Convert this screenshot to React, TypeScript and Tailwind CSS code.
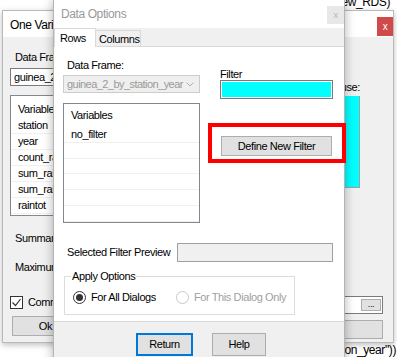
// Two overlapping WinForms dialogs: "One Variable Summarise" behind, "Data Options" in front.

function Btn({ label, className = '' }: { label: string; className?: string }) {
  return (
    <div className={`flex items-center justify-center border border-[#adadad] bg-[#e1e1e1] ${className}`}>
      {label}
    </div>
  );
}

function BackWindow() {
  const rows = ['station', 'year', 'count_rain', 'sum_rain', 'sum_rain_days', 'raintot'];
  return (
    <div className="absolute left-[2px] top-[10px] w-[392px] h-[333px] border border-[#b9b9b9] bg-[#f0f0f0] shadow-[0_2px_6px_rgba(0,0,0,0.25)] flex flex-col">
      {/* title bar */}
      <div className="h-[26px] bg-white flex items-start justify-between pl-[7px]">
        <span className="mt-[8px] text-[12px] leading-[13px]">One Variable Summarise</span>
        <div className="mt-[6px] w-[16px] h-[19px] bg-[#d0494b] text-white text-[10px] flex items-center justify-center">x</div>
      </div>

      <div className="flex flex-1 pl-[7px] pr-[10px]">
        {/* left column */}
        <div className="w-[160px] flex flex-col">
          <span className="mt-[14px] ml-[5px]">Data Frame:</span>
          <div className="mt-[4px] h-[18px] border border-[#7a7a7a] bg-white flex items-center pl-[3px] whitespace-nowrap overflow-hidden">
            guinea_2_by_station_year
          </div>
          <div className="mt-[9px] h-[121px] border border-[#828790] bg-white flex flex-col">
            <div className="h-[22px] flex items-end pb-[2px] pl-[7px]">Variables</div>
            {rows.map(r => (
              <div key={r} className="h-[16px] flex items-center pl-[7px] border-b border-[#f0f0f0]">{r}</div>
            ))}
          </div>
          <span className="mt-[16px] ml-[5px] whitespace-nowrap">Summaries</span>
          <span className="mt-[16px] ml-[5px] whitespace-nowrap">Maximum number of factor levels</span>
          <div className="mt-[22px] flex items-center">
            <div className="w-[13px] h-[13px] border border-[#333] bg-white flex items-center justify-center">
              <svg width="11" height="11" viewBox="0 0 11 11">
                <polyline points="1.5,5.5 4.5,8.5 9.5,2" fill="none" stroke="#333" strokeWidth="1.2" />
              </svg>
            </div>
            <span className="ml-[5px] whitespace-nowrap">Comment:</span>
          </div>
          <Btn label="Ok" className="mt-[7px] ml-[2px] w-[67px] h-[20px]" />
        </div>

        {/* right column */}
        <div className="ml-auto w-[120px] flex flex-col">
          <span className="mt-[44px] pr-[23px] text-right whitespace-nowrap">Variables to use:</span>
          <div className="mt-[2px] w-[97px] h-[92px] bg-[#00ffff] border-r border-b border-[#a0a0a0]" />
          <div className="mt-[108px] h-[18px] border border-[#7a7a7a] bg-white flex items-center justify-end pr-[1px]">
            <div className="w-[20px] h-[12px] border border-[#adadad] bg-[#e1e1e1] text-[9px] leading-[8px] flex justify-center">...</div>
          </div>
          <Btn label="To Script" className="mt-[6px] h-[19px]" />
        </div>
      </div>
    </div>
  );
}

function FrontWindow() {
  return (
    <div className="absolute left-[53px] top-0 w-[292px] h-[370px] border-l border-r border-[#b4b4b4] bg-[#f0f0f0] shadow-[0_0_10px_rgba(0,0,0,0.3)] flex flex-col">
      {/* title bar */}
      <div className="h-[28px] bg-white flex items-start justify-between pl-[7px]">
        <span className="mt-[8px] text-[12px] leading-[13px] text-[#999]">Data Options</span>
        <div className="mt-[6px] w-[17px] h-[18px] bg-[#e8e8e8] text-[#b5b5b5] text-[9px] flex items-center justify-center">x</div>
      </div>

      {/* tab strip */}
      <div className="h-[19px] flex items-end">
        <div className="w-[42px] h-[19px] bg-white border-l border-t border-r border-[#d9d9d9] pl-[5px] pt-[3px]">Rows</div>
        <div className="w-[45px] h-[17px] border-t border-r border-b border-[#d9d9d9] pl-[3px] pt-[2px] whitespace-nowrap">Columns</div>
        <div className="flex-1 border-b border-[#d9d9d9]" />
      </div>

      {/* tab page */}
      <div className="h-[275px] bg-white border-b border-[#dadada] px-[9px] flex flex-col">
        <div className="flex">
          <div className="w-[137px] flex flex-col">
            <span className="mt-[12px] ml-[4px]">Data Frame:</span>
            <div className="mt-[3px] h-[18px] border border-[#cccccc] bg-[#efefef] flex items-center justify-between pl-[3px] pr-[5px] text-[#9a9a9a]">
              <span className="whitespace-nowrap tracking-[-0.55px]">guinea_2_by_station_year</span>
              <svg width="8" height="5" viewBox="0 0 8 5">
                <polyline points="0.5,0.5 4,4 7.5,0.5" fill="none" stroke="#b0b0b0" strokeWidth="1" />
              </svg>
            </div>
            <div className="mt-[10px] h-[120px] border border-[#828790] bg-white flex flex-col">
              <div className="h-[23px] flex items-end pb-[5px] pl-[7px]">Variables</div>
              {['no_filter', '', '', '', '', ''].map((v, i) => (
                <div key={i} className="h-[16px] flex items-center pl-[7px] border-b border-[#f0f0f0]">{v}</div>
              ))}
            </div>
          </div>

          <div className="ml-[20px] w-[113px] flex flex-col">
            <span className="mt-[21px] leading-[12px]">Filter</span>
            <div className="h-[19px] border border-[#7a7a7a] bg-white p-[1px]">
              <div className="h-full bg-[#00ffff]" />
            </div>
            <Btn label="Define New Filter" className="mt-[37px] ml-[1px] w-[111px] h-[20px]" />
          </div>
        </div>

        <div className="mt-[20px] flex items-center">
          <span className="w-[114px] pl-[4px] whitespace-nowrap">Selected Filter Preview</span>
          <div className="w-[156px] h-[19px] border border-[#a0a0a0] bg-[#f0f0f0]" />
        </div>

        <fieldset className="mt-[7px] ml-[1px] w-[231px] border border-[#dcdcdc]">
          <legend className="ml-[6px] px-[1px] leading-[14px]">Apply Options</legend>
          <div className="flex items-center pl-[8px] mt-[8px] pb-[10px]">
            <div className="w-[103px] flex items-center">
              <div className="w-[13px] h-[13px] rounded-full border border-[#333] bg-white flex items-center justify-center">
                <div className="w-[7px] h-[7px] rounded-full bg-[#333]" />
              </div>
              <span className="ml-[5px]">For All Dialogs</span>
            </div>
            <div className="w-[13px] h-[13px] rounded-full border border-[#c8c8c8] bg-white" />
            <span className="ml-[5px] text-[#a0a0a0] whitespace-nowrap">For This Dialog Only</span>
          </div>
        </fieldset>
      </div>

      {/* footer */}
      <div className="flex pt-[11px] pl-[82px] gap-[19px]">
        <Btn label="Return" className="w-[57px] h-[23px] !border-2 !border-[#0078d7]" />
        <Btn label="Help" className="w-[54px] h-[23px]" />
      </div>
    </div>
  );
}

export default function App() {
  return (
    <div className="relative w-[397px] h-[357px] overflow-hidden bg-white font-['Liberation_Sans',Arial,sans-serif] text-[11px] leading-[13px] tracking-[-0.4px] text-black">
      {/* desktop text behind the dialogs */}
      <div className="absolute right-[7px] top-[-4px] text-[12px] leading-[12px] whitespace-nowrap">(guinea_2, new_RDS)</div>
      <div className="absolute right-[1px] top-[344px] text-[12px] leading-[12px] whitespace-nowrap">guinea_2_by_station_year"))</div>

      <BackWindow />
      <FrontWindow />

      {/* red annotation box */}
      <div className="absolute left-[208px] top-[123px] w-[138px] h-[40px] border-4 border-[#ff0000]" />
    </div>
  );
}
